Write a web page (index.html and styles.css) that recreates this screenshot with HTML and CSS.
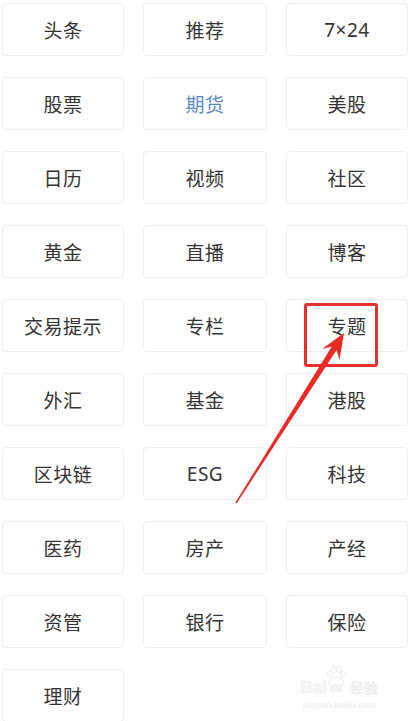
FILE: index.html
```html
<!DOCTYPE html>
<html lang="zh">
<head>
<meta charset="utf-8">
<link rel="stylesheet" href="styles.css">
</head>
<body>
<div class="page">
  <div class="grid">
    <div class="tile">头条</div>
    <div class="tile">推荐</div>
    <div class="tile">7×24</div>
    <div class="tile">股票</div>
    <div class="tile active">期货</div>
    <div class="tile">美股</div>
    <div class="tile">日历</div>
    <div class="tile">视频</div>
    <div class="tile">社区</div>
    <div class="tile">黄金</div>
    <div class="tile">直播</div>
    <div class="tile">博客</div>
    <div class="tile">交易提示</div>
    <div class="tile">专栏</div>
    <div class="tile">专题</div>
    <div class="tile">外汇</div>
    <div class="tile">基金</div>
    <div class="tile">港股</div>
    <div class="tile">区块链</div>
    <div class="tile">ESG</div>
    <div class="tile">科技</div>
    <div class="tile">医药</div>
    <div class="tile">房产</div>
    <div class="tile">产经</div>
    <div class="tile">资管</div>
    <div class="tile">银行</div>
    <div class="tile">保险</div>
    <div class="tile">理财</div>
  </div>

  <div class="highlight"></div>
  <svg class="arrow" width="410" height="721" viewBox="0 0 410 721">
    <polygon points="344,333 339.5,360 336.6,350 236.6,503.4 235.4,502.6 331.8,346.4 322,349" fill="#ec2a24"/>
  </svg>

  <div class="watermark">
    <div class="wm-top">
      <span class="wm-bai">Bai</span>
      <svg class="wm-paw" width="22" height="22" viewBox="0 0 22 22">
        <g fill="none" stroke="#ececec" stroke-width="1">
          <ellipse cx="5" cy="8" rx="2.5" ry="3"/>
          <ellipse cx="9" cy="3.5" rx="2.5" ry="3"/>
          <ellipse cx="14" cy="3.5" rx="2.5" ry="3"/>
          <ellipse cx="18" cy="8" rx="2.5" ry="3"/>
          <path d="M4 19 C4 13 8 11 11.5 11 C15 11 19 13 19 19 Z"/>
        </g>
      </svg>
      <span class="wm-du">du</span>
      <span class="wm-jy">经验</span>
    </div>
    <div class="wm-url">jingyan.baidu.com</div>
  </div>
</div>
</body>
</html>
```

FILE: styles.css
```css
html, body {
  margin: 0;
  padding: 0;
  background: #ffffff;
}

body {
  font-family: "Noto Sans", "Noto Sans CJK SC", sans-serif;
  width: 410px;
  height: 721px;
  overflow: hidden;
}

.page {
  position: relative;
  width: 410px;
  height: 721px;
}

.grid {
  display: grid;
  grid-template-columns: 122px 124px 122px;
  grid-auto-rows: 53px;
  column-gap: 19px;
  row-gap: 21px;
  padding: 3px 2px 0 2px;
}

.tile {
  box-sizing: border-box;
  border: 1px solid #eeeeee;
  border-radius: 4px;
  background: #ffffff;
  display: flex;
  align-items: center;
  justify-content: center;
  font-size: 19px;
  color: #333333;
  letter-spacing: 0.5px;
}

.tile.active {
  color: #5a88c4;
}

.highlight {
  position: absolute;
  left: 304px;
  top: 303px;
  width: 74px;
  height: 64px;
  box-sizing: border-box;
  border: 3px solid #e8302c;
  border-radius: 3px;
}

.arrow {
  position: absolute;
  left: 0;
  top: 0;
}

.watermark {
  position: absolute;
  left: 294px;
  top: 668px;
  width: 90px;
  display: flex;
  flex-direction: column;
  align-items: center;
  color: #f0f0f0;
}

.wm-top {
  display: flex;
  align-items: flex-end;
  height: 28px;
}

.wm-bai {
  font-family: "Liberation Sans", sans-serif;
  font-size: 17px;
  font-weight: bold;
  line-height: 17px;
  color: #fafafa;
  -webkit-text-stroke: 0.5px #e8e8e8;
}

.wm-paw {
  margin: 0 -20px 8px -2px;
}

.wm-du {
  font-family: "Liberation Sans", sans-serif;
  font-size: 10px;
  font-weight: bold;
  line-height: 12px;
  margin: 0 2px 1px 3px;
  color: #ebebeb;
}

.wm-jy {
  font-family: "Noto Sans CJK SC", sans-serif;
  font-size: 14px;
  line-height: 17px;
  margin-left: 6px;
  color: #fafafa;
  -webkit-text-stroke: 0.5px #e8e8e8;
}

.wm-url {
  font-family: "Liberation Sans", sans-serif;
  font-size: 9px;
  line-height: 12px;
  margin-top: 3px;
  color: #ebebeb;
}
```
